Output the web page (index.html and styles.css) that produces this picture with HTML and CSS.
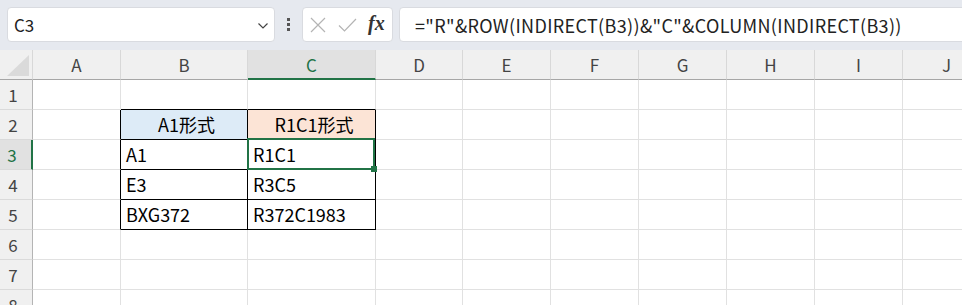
FILE: index.html
```html
<!DOCTYPE html>
<html>
	<head>
		<meta charset="utf-8">
		<title>Book1 - Excel</title>
		<link rel="stylesheet" href="styles.css">
	</head>
	<body>
		<div class="topbar">
			<div class="namebox">
				<span class="ref">C3</span>
				<svg class="chev" width="12" height="8" viewBox="0 0 12 8"><polyline points="1.5,1.5 6,6 10.5,1.5" fill="none" stroke="#444" stroke-width="1.2"/></svg>
			</div>
			<div class="grip"><i></i><i></i><i></i></div>
			<div class="fbtns">
				<svg width="16" height="16" viewBox="0 0 16 16"><path d="M1 1 L15 15 M15 1 L1 15" stroke="#b4b4b4" stroke-width="1.2"/></svg>
				<svg width="19" height="16" viewBox="0 0 19 16"><polyline points="1,8.5 6.5,14 18,2" fill="none" stroke="#b4b4b4" stroke-width="1.2"/></svg>
				<span class="fx">fx</span>
			</div>
			<div class="formula">="R"&amp;ROW(INDIRECT(B3))&amp;"C"&amp;COLUMN(INDIRECT(B3))</div>
		</div>

		<div class="sheet">
			<!-- column headers -->
			<div class="ch corner"><span class="tri"></span></div>
			<div class="ch">A</div>
			<div class="ch">B</div>
			<div class="ch sel">C</div>
			<div class="ch">D</div>
			<div class="ch">E</div>
			<div class="ch">F</div>
			<div class="ch">G</div>
			<div class="ch">H</div>
			<div class="ch">I</div>
			<div class="ch">J</div>
			<div class="ch"></div>

			<!-- row 1 -->
			<div class="rh">1</div>
			<div class="c"></div><div class="c tb"></div><div class="c tb"></div>
			<div class="c"></div><div class="c"></div><div class="c"></div><div class="c"></div><div class="c"></div><div class="c"></div><div class="c"></div><div class="c"></div>

			<!-- row 2 -->
			<div class="rh">2</div>
			<div class="c lb"></div><div class="c t head-a">A1形式</div><div class="c t head-r">R1C1形式</div>
			<div class="c"></div><div class="c"></div><div class="c"></div><div class="c"></div><div class="c"></div><div class="c"></div><div class="c"></div><div class="c"></div>

			<!-- row 3 -->
			<div class="rh sel">3</div>
			<div class="c lb"></div><div class="c t">A1</div><div class="c t active">R1C1</div>
			<div class="c"></div><div class="c"></div><div class="c"></div><div class="c"></div><div class="c"></div><div class="c"></div><div class="c"></div><div class="c"></div>

			<!-- row 4 -->
			<div class="rh">4</div>
			<div class="c lb"></div><div class="c t">E3</div><div class="c t">R3C5</div>
			<div class="c"></div><div class="c"></div><div class="c"></div><div class="c"></div><div class="c"></div><div class="c"></div><div class="c"></div><div class="c"></div>

			<!-- row 5 -->
			<div class="rh">5</div>
			<div class="c lb"></div><div class="c t">BXG372</div><div class="c t">R372C1983</div>
			<div class="c"></div><div class="c"></div><div class="c"></div><div class="c"></div><div class="c"></div><div class="c"></div><div class="c"></div><div class="c"></div>

			<!-- row 6 -->
			<div class="rh">6</div>
			<div class="c"></div><div class="c"></div><div class="c"></div>
			<div class="c"></div><div class="c"></div><div class="c"></div><div class="c"></div><div class="c"></div><div class="c"></div><div class="c"></div><div class="c"></div>

			<!-- row 7 -->
			<div class="rh">7</div>
			<div class="c"></div><div class="c"></div><div class="c"></div>
			<div class="c"></div><div class="c"></div><div class="c"></div><div class="c"></div><div class="c"></div><div class="c"></div><div class="c"></div><div class="c"></div>

			<!-- row 8 -->
			<div class="rh">8</div>
			<div class="c"></div><div class="c"></div><div class="c"></div>
			<div class="c"></div><div class="c"></div><div class="c"></div><div class="c"></div><div class="c"></div><div class="c"></div><div class="c"></div><div class="c"></div>
		</div>
	</body>
</html>
```

FILE: styles.css
```css
/*   #217346; /*excel green*/
/*   #e6e9ef; /*toolbar*/
/*   #f0f0f0; /*headers*/
/*   #e1e1e1; /*gridlines*/
body{
	margin:0;
	width:962px;
	height:305px;
	overflow:hidden;
	background-color:#fff;
	font-family:"Noto Sans CJK JP", "Noto Sans", sans-serif;
	color:#000;
}

/* formula bar */
.topbar{
	height:50px;
	box-sizing:border-box;
	padding:7px 0 0 7px;
	background-color:#e6e9ef;
	display:flex;
	align-items:flex-start;
	width:1200px;
}
.namebox,
.fbtns,
.formula{
	height:35px;
	box-sizing:border-box;
	background-color:#fff;
	border:1px solid #d9dbe0;
	border-radius:4px;
	display:flex;
	align-items:center;
}
.namebox{
	width:268px;
	padding:0 5px 0 6px;
	justify-content:space-between;
}
.ref{
	font-size:17px;
	color:#222;
}
.chev{
	margin-top:2px;
}
.grip{
	width:27px;
	height:35px;
	display:flex;
	flex-direction:column;
	align-items:center;
	justify-content:center;
	gap:2px;
}
.grip i{
	display:block;
	width:3px;
	height:3px;
	background-color:#555;
}
.fbtns{
	width:91px;
	padding:0 0 0 7px;
	gap:12px;
}
.fx{
	font-family:"Liberation Serif", serif;
	font-style:italic;
	font-weight:bold;
	font-size:20px;
	color:#333;
	margin-left:-1px;
	margin-top:-3px;
}
.formula{
	margin-left:6px;
	flex:1;
	padding-left:15px;
	font-size:18px;
	letter-spacing:0.35px;
	color:#222;
	white-space:nowrap;
}

/* grid */
.sheet{
	display:grid;
	grid-template-columns:33px 88px 127px 128px 87px repeat(6, 88px) 120px;
	grid-auto-rows:30px;
}
.ch, .rh, .c{
	box-sizing:border-box;
}
.ch{
	background-color:#f0f0f0;
	border-right:1px solid #d8d8d8;
	border-bottom:1px solid #a6a6a6;
	display:flex;
	align-items:center;
	justify-content:center;
	font-size:17px;
	color:#444;
}
.ch.sel{
	background-color:#e1e1e1;
	border-bottom:2px solid #217346;
	color:#217346;
	padding-top:1px;
}
.corner{
	position:relative;
}
.tri{
	position:absolute;
	right:3px;
	bottom:3px;
	width:0;
	height:0;
	border-left:22px solid transparent;
	border-bottom:21px solid #dadada;
}
.rh{
	background-color:#f0f0f0;
	border-right:1px solid #b4b4b4;
	border-bottom:1px solid #dadada;
	display:flex;
	align-items:center;
	justify-content:center;
	font-size:17px;
	color:#444;
	padding-right:6px;
}
.rh.sel{
	background-color:#e1e1e1;
	border-right:2px solid #217346;
	color:#217346;
	padding-right:7px;
}
.c{
	border-right:1px solid #e1e1e1;
	border-bottom:1px solid #e1e1e1;
}
.c.tb{
	border-bottom-color:#000;
}
.c.lb{
	border-right-color:#000;
}
.c.t{
	border-right-color:#000;
	border-bottom-color:#000;
	font-size:18px;
	line-height:29px;
	padding-left:5px;
	white-space:nowrap;
}
.head-a{
	background-color:#ddebf7;
	text-align:center;
}
.head-r{
	background-color:#fce4d6;
	text-align:center;
}
.active{
	position:relative;
}
.active::after{
	content:"";
	position:absolute;
	top:-2px;
	left:-1px;
	right:0;
	bottom:-1px;
	border:2px solid #217346;
}
.active::before{
	content:"";
	position:absolute;
	right:-2px;
	bottom:-3px;
	width:6px;
	height:6px;
	background-color:#217346;
	z-index:1;
}
```
